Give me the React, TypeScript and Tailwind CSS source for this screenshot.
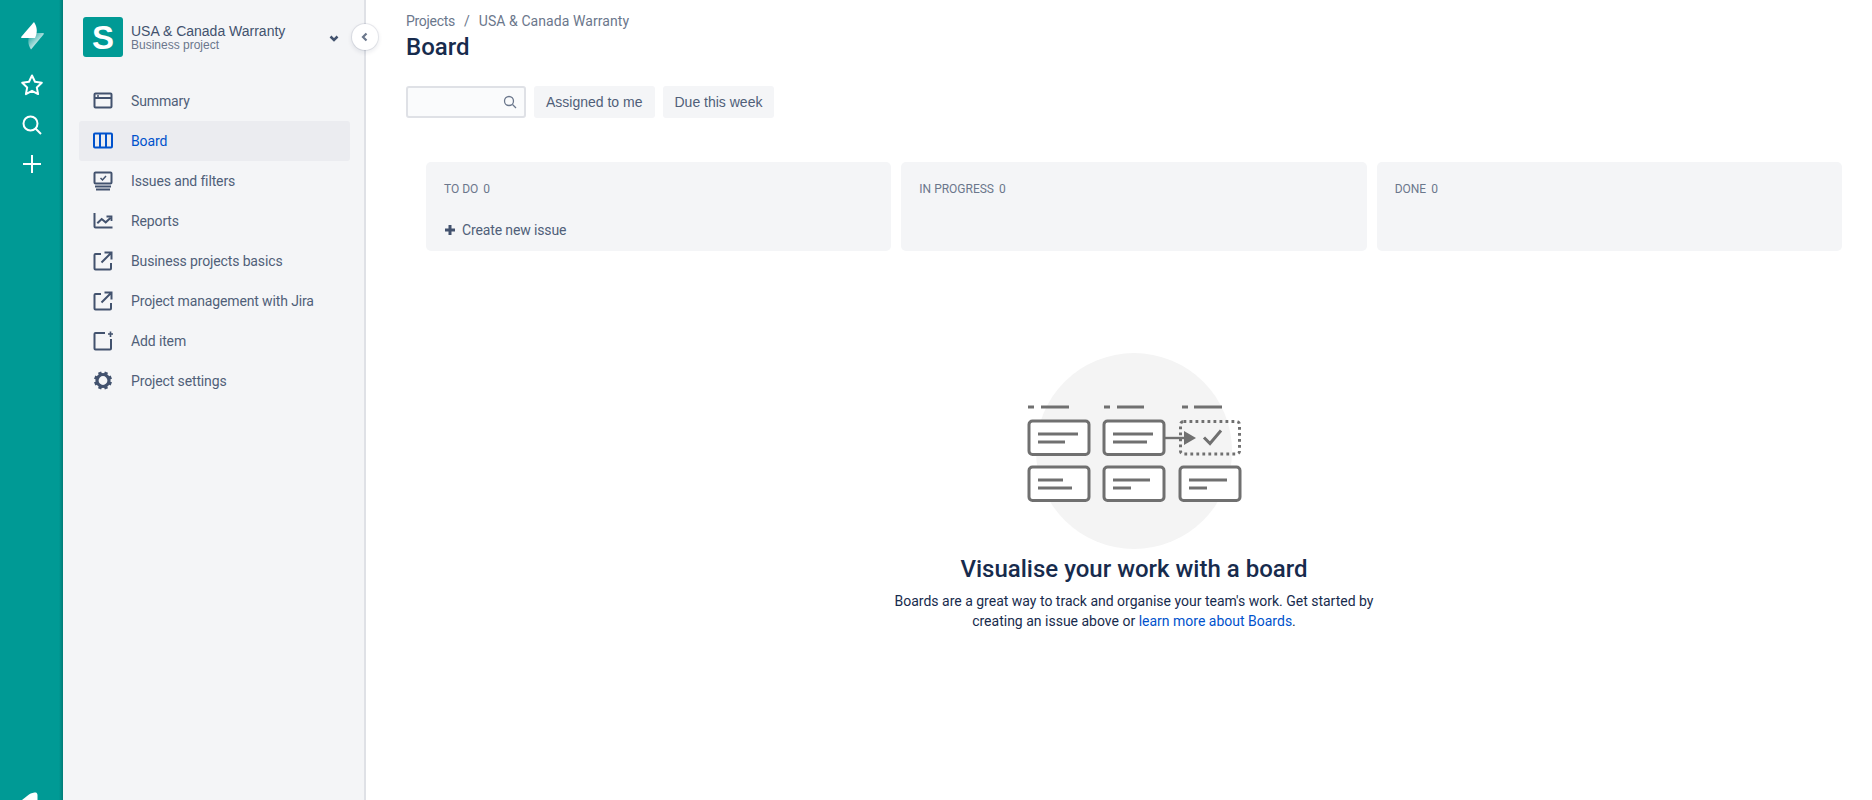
import type { ReactNode } from "react";

const segoe = "font-['Roboto',sans-serif]";
const arial = "font-['Liberation_Sans',sans-serif]";

const ExternalIcon = () => (
  <svg width="24" height="24" viewBox="0 0 24 24" fill="none" stroke="currentColor" strokeWidth="2">
    <path d="M10 5H4.500a1 1 0 0 0-1 1v13.500a1 1 0 0 0 1 1H19a1 1 0 0 0 1-1V14" />
    <path d="M10.500 13.500 19.500 4.500M13.500 3.500h7v7" />
  </svg>
);

const navItems: { label: string; active?: boolean; icon: ReactNode }[] = [
  {
    label: "Summary",
    icon: (
      <svg width="24" height="24" viewBox="0 0 24 24" fill="none" stroke="currentColor" strokeWidth="2">
        <rect x="3.500" y="4.500" width="17" height="14" rx="1" />
        <path d="M3.500 9h17" />
        <path d="M6 7h2" strokeWidth="1.500" />
      </svg>
    ),
  },
  {
    label: "Board",
    active: true,
    icon: (
      <svg width="24" height="24" viewBox="0 0 24 24" fill="none" stroke="#0052cc" strokeWidth="2">
        <rect x="3" y="4.500" width="18" height="14" rx="1" />
        <path d="M9 4.500v14M15 4.500v14" />
      </svg>
    ),
  },
  {
    label: "Issues and filters",
    icon: (
      <svg width="24" height="24" viewBox="0 0 24 24" fill="none" stroke="currentColor" strokeWidth="2">
        <rect x="3.500" y="3.500" width="17" height="11" rx="1" />
        <path d="M9.500 9l2 2 3.500-4" strokeWidth="1.500" />
        <path d="M4 17.500h16M5 20.500h14" />
      </svg>
    ),
  },
  {
    label: "Reports",
    icon: (
      <svg width="24" height="24" viewBox="0 0 24 24" fill="none" stroke="currentColor" strokeWidth="2">
        <path d="M3.500 4v13.500a1 1 0 0 0 1 1h17" />
        <path d="M6.300 14.300l4.400-4.300 4 3.300 5-4.600" />
        <path d="M15.500 7.500h5v4.500" strokeWidth="1.800" />
      </svg>
    ),
  },
  { label: "Business projects basics", icon: <ExternalIcon /> },
  { label: "Project management with Jira", icon: <ExternalIcon /> },
  {
    label: "Add item",
    icon: (
      <svg width="24" height="24" viewBox="0 0 24 24" fill="none" stroke="currentColor" strokeWidth="2">
        <path d="M14 4H4.500a1 1 0 0 0-1 1v14.500a1 1 0 0 0 1 1H19a1 1 0 0 0 1-1V10" />
        <path d="M19.500 2.500v5.500M17 5h5" strokeWidth="1.600" />
      </svg>
    ),
  },
  {
    label: "Project settings",
    icon: (
      <svg width="24" height="24" viewBox="0 0 24 24" fill="none">
        <circle cx="12" cy="11.500" r="6" stroke="currentColor" strokeWidth="3.200" />
        <g stroke="currentColor" strokeWidth="3.400">
          {[0, 45, 90, 135, 180, 225, 270, 315].map((deg) => (
            <path key={deg} d="M12 2.500v3" transform={`rotate(${deg + 22.5} 12 11.500)`} />
          ))}
        </g>
      </svg>
    ),
  },
];

const columns = ["TO DO", "IN PROGRESS", "DONE"];

function BoardIllustration() {
  const cards = [
    [49, 81],
    [124, 81],
    [49, 127],
    [124, 127],
    [200, 127],
  ];
  const lines = [
    // column headers
    [48, 54, 67], [61, 89, 67], [124, 130, 67], [137, 164, 67], [202, 208, 67], [214, 242, 67],
    // card text
    [58, 98, 94], [58, 85, 102], [133, 173, 94], [133, 167, 102],
    [58, 83, 140], [58, 92, 148], [133, 170, 140], [133, 151, 148], [209, 247, 140], [209, 227, 148],
  ];
  return (
    <svg width="308" height="210" viewBox="0 0 308 210" fill="none">
      <circle cx="154" cy="111" r="98" fill="#f4f4f4" />
      {cards.map(([x, y]) => (
        <rect key={`${x}-${y}`} x={x} y={y} width="60" height="33.500" rx="3.500" fill="#fff" stroke="#707070" strokeWidth="3" />
      ))}
      {lines.map(([x1, x2, y]) => (
        <path key={`${x1}-${y}`} d={`M${x1} ${y}H${x2}`} stroke="#707070" strokeWidth="3" />
      ))}
      <rect x="200.500" y="81.500" width="59" height="32.500" rx="3" stroke="#707070" strokeWidth="3" strokeDasharray="2.800 3.200" />
      <path d="M184 98h22" stroke="#707070" strokeWidth="2.400" />
      <path d="M204 91l12 7-12 7z" fill="#707070" />
      <path d="M224 97.500l6 6 11-13" stroke="#707070" strokeWidth="3" />
    </svg>
  );
}

export default function App() {
  return (
    <div className={`flex h-screen overflow-hidden bg-white ${segoe}`}>
      {/* Global rail */}
      <div className="relative flex w-[63px] shrink-0 flex-col items-center justify-between bg-[#009a95] text-white">
        <div className="absolute inset-y-0 right-0 w-[4px] bg-gradient-to-r from-transparent to-black/20" />
        <div className="flex flex-col items-center pt-[21px]">
          <svg width="30" height="30" viewBox="0 0 30 30">
            <defs>
              <linearGradient id="lg" x1="0" y1="0" x2="1" y2="1">
                <stop offset="0.1" stopColor="#fff" stopOpacity="0.15" />
                <stop offset="0.8" stopColor="#fff" />
              </linearGradient>
            </defs>
            <path d="M17 1 4.500 15.500c-.8 1-.2 1.500.8 1.500H18c2.500-5 2.500-11-1-16z" fill="#fff" />
            <path d="M14 28.500 26.500 13.500c.8-1 .2-1.500-.8-1.500H13.500c-3 5-3 11.500.5 16.500z" fill="url(#lg)" />
          </svg>
          <svg className="mt-[22px]" width="24" height="24" viewBox="0 0 24 24" fill="none" stroke="currentColor" strokeWidth="2" strokeLinejoin="round">
            <path d="M12 2.500l3 6.300 6.800.9-5 4.700 1.300 6.700-6.100-3.300-6.100 3.300 1.300-6.700-5-4.700 6.800-.9z" />
          </svg>
          <svg className="mt-[16px]" width="24" height="24" viewBox="0 0 24 24" fill="none" stroke="currentColor" strokeWidth="2">
            <circle cx="10.500" cy="10.500" r="7" />
            <path d="M15.500 15.500 21 21" />
          </svg>
          <svg className="mt-[15px]" width="24" height="24" viewBox="0 0 24 24" fill="none" stroke="currentColor" strokeWidth="2">
            <path d="M12 3v18M3 12h18" />
          </svg>
        </div>
        <svg className="-translate-x-[1px]" width="30" height="8" viewBox="0 0 30 8">
          <path d="M6 8 13 2.500C15 1 18 .5 20 .5c1 .5 1.500 1.500 1.500 3V8z" fill="#fff" />
        </svg>
      </div>

      {/* Project sidebar */}
      <div className="relative w-[303px] shrink-0 border-r-2 border-[#dfe1e6] bg-[#f4f5f7] text-[#42526e]">
        <div className="flex h-[81px] items-start pl-[20px] pr-[20px] pt-[17px]">
          <div className={`flex h-[40px] w-[40px] items-center justify-center rounded-[3px] bg-[#009a95] text-[33px] font-bold leading-none text-white ${arial}`}>
            S
          </div>
          <div className={`ml-[8px] mt-[6px] flex-1 ${arial}`}>
            <div className="text-[14px] leading-[16px] text-[#42526e]">USA &amp; Canada Warranty</div>
            <div className="text-[12px] leading-[13px] text-[#6b778c]">Business project</div>
          </div>
          <svg className="mt-[11px]" width="20" height="20" viewBox="0 0 20 20" fill="none" stroke="#42526e" strokeWidth="2.500">
            <path d="M6.500 8.500 10 12l3.500-3.500" />
          </svg>
        </div>
        <nav className="flex flex-col pl-[16px] pr-[14px]">
          {navItems.map((item) => (
            <div
              key={item.label}
              className={`flex h-[40px] items-center rounded-[3px] pl-[12px] text-[14px] tracking-[-0.13px] ${item.active ? "bg-[#ebecf0] text-[#0052cc]" : "text-[#505f79]"}`}
            >
              <span className="flex w-[24px] justify-center text-[#42526e]">{item.icon}</span>
              <span className="ml-[16px]">{item.label}</span>
            </div>
          ))}
        </nav>
        <button className="absolute right-[-14px] top-[24px] flex h-[26px] w-[26px] items-center justify-center rounded-full bg-white shadow-[0_0_0_1px_rgba(9,30,66,0.08),0_2px_4px_1px_rgba(9,30,66,0.08)]">
          <svg width="12" height="12" viewBox="0 0 12 12" fill="none" stroke="#6b778c" strokeWidth="2.200">
            <path d="M7.500 2.500 4 6l3.500 3.500" />
          </svg>
        </button>
      </div>

      {/* Main content */}
      <main className="flex-1">
        <div className="pl-[40px] pt-[12px]">
          <div className="flex text-[14px] leading-[18px] text-[#6b778c]">
            <span className="tracking-[-0.3px]">Projects</span>
            <span className="mx-[9px]">/</span>
            <span className="tracking-[0.08px]">USA &amp; Canada Warranty</span>
          </div>
          <h1 className="mt-[1px] text-[24px] font-medium leading-[32px] text-[#172b4d]">Board</h1>
          <div className="mt-[23px] flex gap-[8px]">
            <div className="flex h-[32px] w-[120px] items-center justify-end rounded-[3px] border-2 border-[#dfe1e6] bg-[#fafbfc] pr-[6px]">
              <svg width="16" height="16" viewBox="0 0 16 16" fill="none" stroke="#6b778c" strokeWidth="1.300">
                <circle cx="7" cy="7" r="4.500" />
                <path d="M10.500 10.500 14 14" />
              </svg>
            </div>
            <div className={`flex h-[32px] items-center rounded-[3px] bg-[#f4f5f7] px-[12px] text-[14px] text-[#505f79] ${arial}`}>Assigned to me</div>
            <div className={`flex h-[32px] items-center rounded-[3px] bg-[#f4f5f7] px-[12px] text-[14px] text-[#505f79] ${arial}`}>Due this week</div>
          </div>
        </div>

        <div className="pl-[60px] pr-[30px] pt-[44px]">
          <div className="grid grid-cols-3 gap-[10px]">
            {columns.map((name, i) => (
              <div key={name} className="h-[89px] rounded-[5px] bg-[#f4f5f7] px-[18px] pt-[18px] text-[#6b778c]">
                <div className="text-[12px] leading-[18px]">
                  {name} <span className="ml-[2px]">0</span>
                </div>
                {i === 0 && (
                  <div className="mt-[23px] flex items-center text-[14px] leading-[18px] tracking-[-0.13px] text-[#505f79]">
                    <svg className="mr-[6px]" width="12" height="12" viewBox="0 0 12 12" fill="none" stroke="#42526e" strokeWidth="3">
                      <path d="M6 1v10M1 6h10" />
                    </svg>
                    Create new issue
                  </div>
                )}
              </div>
            ))}
          </div>

          <div className="mt-[89px] flex flex-col items-center">
            <BoardIllustration />
            <h2 className="mt-[3px] text-[24px] font-medium leading-[32px] text-[#172b4d]">Visualise your work with a board</h2>
            <p className="mt-[6px] w-[490px] text-center text-[14px] leading-[20px] text-[#172b4d]">
              Boards are a great way to track and organise your team's work. Get started by creating an issue above or{" "}
              <span className="text-[#0052cc]">learn more about Boards</span>.
            </p>
          </div>
        </div>
      </main>
    </div>
  );
}
